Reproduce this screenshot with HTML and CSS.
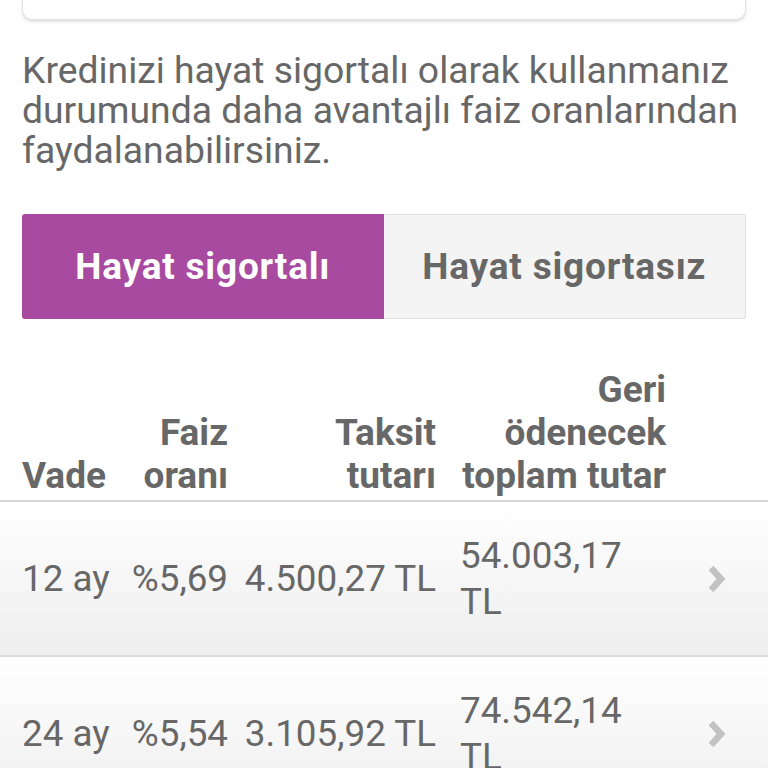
FILE: index.html
```html
<!DOCTYPE html>
<html lang="tr">
<head>
<meta charset="utf-8">
<title>Kredi</title>
<link rel="stylesheet" href="styles.css">
</head>
<body>
<div class="card-top"></div>
<p class="intro">Kredinizi hayat sigortalı olarak kullanmanız durumunda daha avantajlı faiz oranlarından faydalanabilirsiniz.</p>
<div class="tabs">
  <div class="tab tab-active">Hayat sigortalı</div>
  <div class="tab">Hayat sigortasız</div>
</div>
<div class="table">
  <div class="row head">
    <div class="c1">Vade</div>
    <div class="c2">Faiz<br>oranı</div>
    <div class="c3">Taksit<br>tutarı</div>
    <div class="c4">Geri<br>ödenecek<br>toplam tutar</div>
    <div class="c5"></div>
  </div>
  <div class="row item">
    <div class="c1">12 ay</div>
    <div class="c2">%5,69</div>
    <div class="c3">4.500,27 TL</div>
    <div class="c4">54.003,17 TL</div>
    <div class="c5"><svg class="chev" viewBox="0 0 22 28" width="22" height="28"><path d="M5 3 L15 14 L5 25" fill="none" stroke="#c2c2c2" stroke-width="6.5" stroke-linejoin="miter"/></svg></div>
  </div>
  <div class="row item">
    <div class="c1">24 ay</div>
    <div class="c2">%5,54</div>
    <div class="c3">3.105,92 TL</div>
    <div class="c4">74.542,14 TL</div>
    <div class="c5"><svg class="chev" viewBox="0 0 22 28" width="22" height="28"><path d="M5 3 L15 14 L5 25" fill="none" stroke="#c2c2c2" stroke-width="6.5" stroke-linejoin="miter"/></svg></div>
  </div>
</div>
</body>
</html>
```
FILE: styles.css
```css
html, body {
  margin: 0;
  padding: 0;
  background: #ffffff;
}
body {
  font-family: Roboto, "Noto Sans", sans-serif;
  color: #676767;
  overflow: hidden;
}
.card-top {
  margin: 0 22px;
  height: 19px;
  background: #fff;
  border: 1px solid #e2e2e2;
  border-top: none;
  border-radius: 0 0 10px 10px;
  box-shadow: 0 2px 3px rgba(0,0,0,0.12);
}
.intro {
  margin: 30px 22px 0;
  font-size: 37.3px;
  line-height: 40px;
}
.tabs {
  margin: 44px 22px 0;
  display: flex;
  height: 105px;
}
.tab {
  flex: 1;
  display: flex;
  align-items: center;
  justify-content: center;
  font-size: 37px;
  letter-spacing: 0.8px;
  font-weight: 700;
  color: #676767;
  background: #f4f4f4;
  border: 1px solid #e0e0e0;
  border-left: none;
  border-radius: 0 3px 3px 0;
}
.tab-active {
  background: #a84ba0;
  color: #ffffff;
  border: none;
  border-radius: 3px 0 0 3px;
}
.table {
  margin-top: 49px;
}
.row {
  display: grid;
  grid-template-columns: 22px 100px 106px 208px 230px 1fr;
}
.row > div:first-child {
  grid-column: 2;
}
.head {
  font-size: 37px;
  font-weight: 700;
  line-height: 43px;
  align-items: end;
  padding-bottom: 3px;
  border-bottom: 2px solid #d6d6d6;
}
.head .c2, .head .c3, .head .c4 {
  text-align: right;
}
.item {
  font-size: 36.8px;
  line-height: 46px;
  height: 153px;
  align-items: center;
  background: linear-gradient(#ffffff, #eeeeee);
  border-bottom: 2px solid #dcdcdc;
}
.item .c2, .item .c3 {
  text-align: right;
}
.item .c4 {
  padding-left: 24px;
}
.c5 {
  display: flex;
  justify-content: flex-end;
  padding-right: 40px;
}
.chev {
  display: block;
}
```
